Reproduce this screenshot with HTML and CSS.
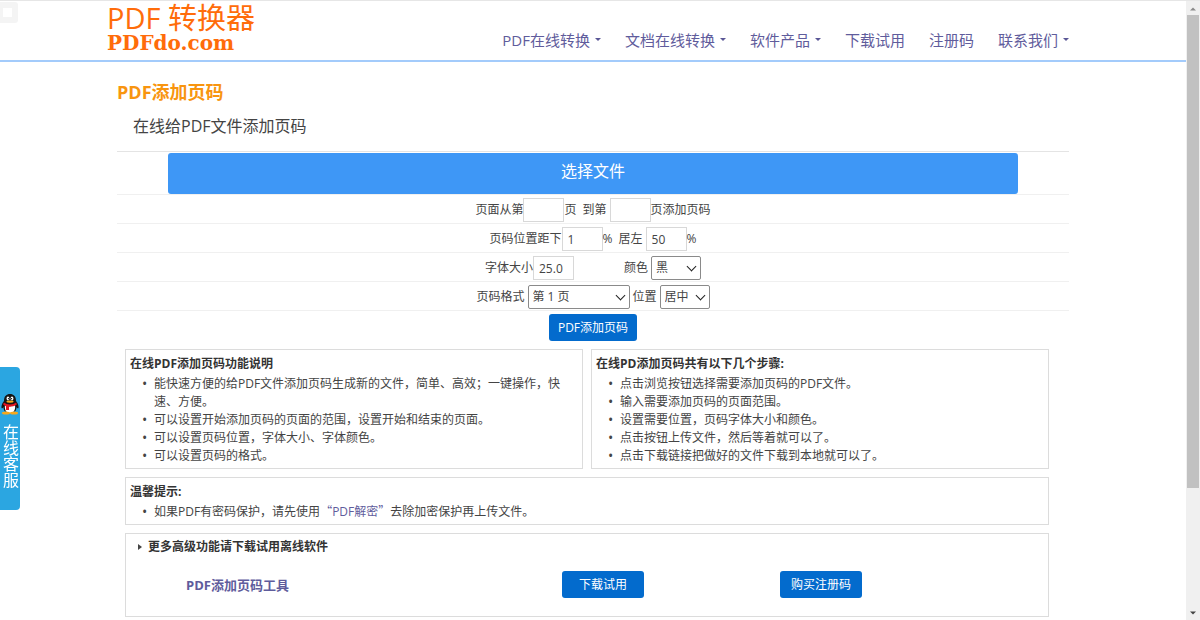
FILE: index.html
```html
<!DOCTYPE html>
<html lang="zh-CN">
<head>
<meta charset="utf-8">
<title>PDF添加页码</title>
<link rel="stylesheet" href="styles.css">
</head>
<body>
<div class="page">
  <header class="header">
    <div class="header-inner">
      <a class="logo" href="#"><span class="logo-name">PDF 转换器</span><span class="logo-domain">PDFdo.com</span></a>
      <nav class="nav">
        <a class="has-menu" href="#">PDF在线转换</a>
        <a class="has-menu" href="#">文档在线转换</a>
        <a class="has-menu" href="#">软件产品</a>
        <a href="#">下载试用</a>
        <a href="#">注册码</a>
        <a class="has-menu" href="#">联系我们</a>
      </nav>
    </div>
  </header>
  <main class="main">
    <h1>PDF添加页码</h1>
    <p class="subtitle">在线给PDF文件添加页码</p>
    <form class="form">
      <div class="pick"><button class="choose" type="button">选择文件</button></div>
      <div class="row">
        <label for="from">页面从第</label><input id="from" type="text"><span>页</span>
        <label class="gap-wide" for="to">到第</label><input class="gap" id="to" type="text"><span>页添加页码</span>
      </div>
      <div class="row">
        <label for="bottom">页码位置距下</label><input id="bottom" type="text" value="1"><span>%</span>
        <label class="gap-wide" for="left">居左</label><input class="gap" id="left" type="text" value="50"><span>%</span>
      </div>
      <div class="row">
        <label for="size">字体大小</label><input id="size" type="text" value="25.0">
        <label class="gap-column" for="color">颜色</label>
        <span class="select gap short"><select id="color"><option>黑</option></select></span>
      </div>
      <div class="row">
        <label for="format">页码格式</label>
        <span class="select gap long"><select id="format"><option>第 1 页</option></select></span>
        <label class="gap" for="align">位置</label>
        <span class="select gap short"><select id="align"><option>居中</option></select></span>
      </div>
      <div class="submit"><button class="btn" type="submit">PDF添加页码</button></div>
    </form>
    <div class="panels">
      <section class="panel">
        <h2>在线PDF添加页码功能说明</h2>
        <ul>
          <li>能快速方便的给PDF文件添加页码生成新的文件，简单、高效；一键操作，快速、方便。</li>
          <li>可以设置开始添加页码的页面的范围，设置开始和结束的页面。</li>
          <li>可以设置页码位置，字体大小、字体颜色。</li>
          <li>可以设置页码的格式。</li>
        </ul>
      </section>
      <section class="panel">
        <h2>在线PD添加页码共有以下几个步骤:</h2>
        <ul>
          <li>点击浏览按钮选择需要添加页码的PDF文件。</li>
          <li>输入需要添加页码的页面范围。</li>
          <li>设置需要位置，页码字体大小和颜色。</li>
          <li>点击按钮上传文件，然后等着就可以了。</li>
          <li>点击下载链接把做好的文件下载到本地就可以了。</li>
        </ul>
      </section>
      <section class="panel wide">
        <h2>温馨提示:</h2>
        <ul>
          <li>如果PDF有密码保护，请先使用<span class="quote">“</span><a href="#">PDF解密</a><span class="quote">”</span>去除加密保护再上传文件。</li>
        </ul>
      </section>
      <section class="panel wide more">
        <h2>更多高级功能请下载试用离线软件</h2>
        <div class="tools">
          <a class="tool-name" href="#">PDF添加页码工具</a>
          <div><a class="btn" href="#">下载试用</a></div>
          <div><a class="btn" href="#">购买注册码</a></div>
        </div>
      </section>
    </div>
  </main>
</div>
<div class="scrollbar">
  <svg viewBox="0 0 13 14"><path d="M3.5 9.5 6.5 6.5 9.5 9.5z" fill="#8a8a8a"/></svg>
  <div class="track"><div class="thumb"></div></div>
  <svg viewBox="0 0 13 14"><path d="M3.5 5.5 6.5 8.5 9.5 5.5z" fill="#444"/></svg>
</div>
<div class="corner"><i></i></div>
<a class="service" href="#">
  <svg viewBox="0 0 20 22">
    <path d="M4 8C4 3 6.500 1 10 1s6 2 6 7c1.500 2 3 4.500 2.500 7-.5 1-1.500-.3-2-1 0 2-.7 3.500-1.500 4.500H5C4.200 17.500 3.500 16 3.500 14c-.5.7-1.500 2-2 1C1 12.500 2.500 10 4 8z" fill="#151515"/>
    <path d="M5 12c1.500 1.500 8.500 1.500 10 0 .7 4-.7 8-5 8s-5.700-4-5-8z" fill="#fff"/>
    <ellipse cx="8" cy="5.500" rx="1.400" ry="2" fill="#fff"/><ellipse cx="12" cy="5.500" rx="1.400" ry="2" fill="#fff"/>
    <circle cx="8.400" cy="5.700" r=".6"/><circle cx="11.600" cy="5.700" r=".6"/>
    <ellipse cx="10" cy="8.600" rx="3.600" ry="1.200" fill="#f7a81b"/>
    <path d="M3.800 9.500c3 2.500 9.400 2.500 12.400 0l.6 2c-2.500 1.700-5 2.300-7.800 2.200V17H6v-3.700c-1-.4-2-1-2.800-1.700z" fill="#e3151f"/>
    <ellipse cx="6" cy="20" rx="4" ry="1.500" fill="#f7a81b"/><ellipse cx="14" cy="20" rx="4" ry="1.500" fill="#f7a81b"/>
  </svg>
  <span>在线客服</span>
</a>
</body>
</html>
```
FILE: styles.css
```css
* { box-sizing: border-box; }

body {
  margin: 0;
  display: flex;
  height: 100vh;
  overflow: hidden;
  border-top: 1px solid #e6e6e6;
  background: #fff;
  color: #444;
  font: 12px/18px "Open Sans", "Noto Sans CJK SC", sans-serif;
}

h1, h2, p, ul { margin: 0; padding: 0; }
a { color: #5f5c9c; text-decoration: none; }
input, select, button { font: inherit; color: inherit; }

.page { flex: 1; min-width: 0; }

.header { border-bottom: 2px solid #a3cbfb; }

.header-inner {
  display: flex;
  justify-content: space-between;
  max-width: 972px;
  min-height: 59px;
  margin: 0 auto;
  padding-right: 10px;
}

.logo { display: flex; flex-direction: column; color: #ff6c0a; white-space: nowrap; }
.logo-name { font-size: 29px; line-height: 34px; }
.logo-domain { font: bold 20px/16px "DejaVu Serif", serif; }

.nav {
  display: flex;
  align-items: center;
  gap: 24px;
  padding-top: 18px;
  font-size: 15px;
  line-height: 20px;
  white-space: nowrap;
}

.has-menu { display: flex; align-items: center; gap: 5px; }
.has-menu::after {
  content: "";
  border: 3px solid transparent;
  border-top-color: #5a5796;
  border-bottom: 0;
}

.main { max-width: 952px; margin: 0 auto; padding-top: 18px; }

h1 { color: #f8950f; font-size: 18px; line-height: 24px; }
.subtitle { padding: 10px 16px 13px; font-size: 16px; line-height: 24px; }

.form { border-top: 1px solid #e4e4e4; }
.pick { padding-top: 1px; border-bottom: 1px solid #f0f0f0; text-align: center; }

.choose {
  display: block;
  width: 850px;
  max-width: 100%;
  height: 41px;
  margin: 0 auto;
  padding: 0 0 5px;
  border: 0;
  border-radius: 3px;
  background: #3e97f6;
  color: #fff;
  font-size: 16px;
}

.row {
  display: flex;
  justify-content: center;
  align-items: center;
  min-height: 29px;
  padding-top: 2px;
  border-bottom: 1px solid #f0f0f0;
}

.row input {
  width: 41px;
  height: 24px;
  padding: 0 5px;
  border: 1px solid #d8d8d8;
  background: #fff;
}

.row .gap { margin-left: 3px; }
.row .gap-wide { margin-left: 6px; }
.row .gap-column { margin-left: 50px; }

.select { position: relative; }
.select::after {
  content: "";
  position: absolute;
  right: 6px;
  top: 7px;
  width: 6px;
  height: 6px;
  border: solid #222;
  border-width: 0 1px 1px 0;
  transform: rotate(45deg);
  pointer-events: none;
}

.select select {
  display: block;
  width: 100%;
  height: 24px;
  padding: 0 4px;
  appearance: none;
  border: 1px solid #8a8a8a;
  border-radius: 2px;
  background: #fff;
}

.short { width: 50px; }
.long { width: 102px; }

.submit { padding: 3px 0 8px; text-align: center; }

.btn {
  display: inline-block;
  min-width: 82px;
  height: 27px;
  padding: 0 9px;
  border: 0;
  border-radius: 3px;
  background: #036bcd;
  color: #fff;
  line-height: 27px;
  text-align: center;
  vertical-align: top;
}

.panels {
  display: grid;
  grid-template-columns: 1fr 1fr;
  gap: 8px;
  padding: 0 20px 0 8px;
}

.panel { padding: 5px 4px 3px; border: 1px solid #dcdcdc; }
.panel h2 { font-size: 12px; line-height: 18px; color: #333; }
.panel ul { padding: 2px 4px 0 24px; list-style: none; }
.panel li { position: relative; }
.panel li::before { content: "•"; position: absolute; left: -12px; font-size: 14px; }
.wide { grid-column: 1 / -1; }
.quote { color: #5f5c9c; font-family: "Noto Sans CJK SC", sans-serif; line-height: 12px; }

.more { padding: 4px 4px 18px; }
.more h2 { display: flex; align-items: center; gap: 6px; padding-left: 8px; }
.more h2::before {
  content: "";
  border: 3px solid transparent;
  border-left: 4px solid #444;
  border-right: 0;
}

.tools {
  display: grid;
  grid-template-columns: 376px 218px 1fr;
  align-items: center;
  margin: 15px 0 0 56px;
}

.tool-name { font-size: 13px; font-weight: bold; }

.scrollbar {
  display: flex;
  flex-direction: column;
  width: 14px;
  background: #f0f0f0;
}

.scrollbar svg { display: block; height: 14px; }
.track { flex: 1; }
.thumb { height: 80%; margin: 0 1px; background: #c1c1c1; }

.corner {
  position: fixed;
  top: 2px;
  left: 0;
  padding: 6px 6px 6px 3px;
  border-radius: 0 3px 3px 0;
  background: #f4f4f4;
}
.corner i { display: block; width: 9px; height: 9px; background: #fff; }

.service {
  position: fixed;
  left: 0;
  top: 367px;
  display: flex;
  flex-direction: column;
  align-items: center;
  gap: 9px;
  width: 20px;
  padding: 26px 0 22px;
  border-radius: 0 4px 4px 0;
  background: #2ba6e1;
  color: #fff;
  font-size: 16px;
  line-height: 20px;
}
.service svg { width: 20px; height: 22px; }
.service span { writing-mode: vertical-rl; }
```
